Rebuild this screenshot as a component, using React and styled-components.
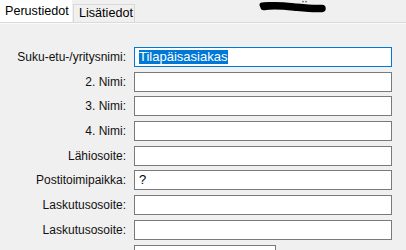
import React from 'react';
import styled, { createGlobalStyle } from 'styled-components';

const GlobalStyle = createGlobalStyle`
  html, body {
    margin: 0;
    padding: 0;
    background: #f0f0f0;
    overflow: hidden;
  }
  body {
    font-family: "Liberation Sans", Arial, sans-serif;
    font-size: 12px;
    color: #000;
  }
`;

const fields = [
  { label: 'Suku-etu-/yritysnimi:', value: 'Tilapäisasiakas', focused: true },
  { label: '2. Nimi:' },
  { label: '3. Nimi:' },
  { label: '4. Nimi:' },
  { label: 'Lähiosoite:' },
  { label: 'Postitoimipaikka:', value: '?' },
  { label: 'Laskutusosoite:' },
  { label: 'Laskutusosoite:' },
  { label: '', short: true },
];

const Scribble = () => (
  <ScribbleSvg width="70" height="14" viewBox="0 0 70 14">
    <path
      d="M5 6.5 C 15 5, 25 6, 35 7 S 53 9, 63 8.5"
      stroke="#000"
      strokeWidth="7.5"
      strokeLinecap="round"
      fill="none"
    />
    <path d="M3 5 L 12 4.5" stroke="#000" strokeWidth="5" strokeLinecap="round" />
    <circle cx="44" cy="1.6" r="0.9" fill="#666" />
    <circle cx="47" cy="1.6" r="0.9" fill="#666" />
  </ScribbleSvg>
);

const App = () => (
  <Page>
    <GlobalStyle />
    <TabStrip>
      <ActiveTab>Perustiedot</ActiveTab>
      <Tab>Lisätiedot</Tab>
      <Scribble />
    </TabStrip>
    <Panel>
      {fields.map((f, i) => (
        <Row key={i}>
          <Label>{f.label}</Label>
          <Input $focused={f.focused} $short={f.short}>
            {f.value && (f.focused ? <Selected>{f.value}</Selected> : <span>{f.value}</span>)}
          </Input>
        </Row>
      ))}
    </Panel>
  </Page>
);

const Page = styled.div`
  width: 406px;
  height: 250px;
  background: #f0f0f0;
  overflow: hidden;
`;

const TabStrip = styled.div`
  display: flex;
  align-items: flex-end;
  height: 22px;
`;

const ActiveTab = styled.div`
  box-sizing: border-box;
  width: 72px;
  height: 22px;
  background: #fff;
  padding: 4px 0 0 5px;
  font-size: 12.6px;
  line-height: 14px;
`;

const Tab = styled.div`
  box-sizing: border-box;
  width: 62px;
  height: 18px;
  margin-left: 1px;
  border: 1px solid #d9d9d9;
  border-bottom: none;
  background: #f0f0f0;
  padding: 1px 0 0 5px;
  font-size: 12.6px;
  line-height: 15px;
`;

const ScribbleSvg = styled.svg`
  align-self: flex-start;
  margin: 0 0 0 124px;
  display: block;
`;

const Panel = styled.div`
  border-top: 1px solid #dadada;
  box-shadow: inset 0 1px 0 #fafafa;
  padding-top: 24px;
  display: flex;
  flex-direction: column;
  gap: 4.7px;
`;

const Row = styled.div`
  display: grid;
  grid-template-columns: 126px auto;
  column-gap: 8px;
  align-items: center;
`;

const Label = styled.div`
  text-align: right;
  white-space: nowrap;
  color: #111;
  line-height: 14px;
`;

const Input = styled.div`
  box-sizing: border-box;
  width: ${p => (p.$short ? '142px' : '258px')};
  height: 20px;
  background: #fff;
  border: 1px solid ${p => (p.$focused ? '#0078d7' : '#7a7a7a')};
  padding: 2px 0 0 4px;
  font-size: 13px;
  line-height: 14px;
  white-space: nowrap;
`;

const Selected = styled.span`
  background: #0078d7;
  color: #fff;
  display: inline-block;
  line-height: 14px;
  padding-right: 1px;
`;

export default App;
